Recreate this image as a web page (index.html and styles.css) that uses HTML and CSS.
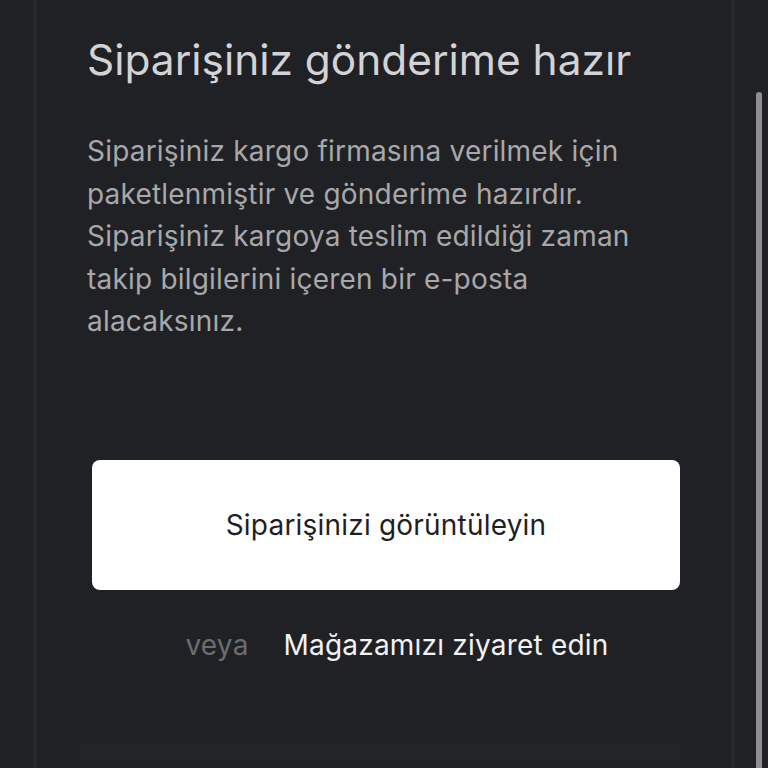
FILE: index.html
```html
<!DOCTYPE html>
<html>
<head>
    <meta charset="UTF-8">
    <title>Siparişiniz gönderime hazır</title>
    <link rel="stylesheet" href="styles.css">
</head>
<body>
    <div class="page">
        <div class="rail"></div>
        <div class="content">
            <h1 class="title">Siparişiniz gönderime hazır</h1>
            <p class="message">
                Siparişiniz kargo firmasına verilmek için paketlenmiştir ve gönderime hazırdır.
                Siparişiniz kargoya teslim edildiği zaman takip bilgilerini içeren bir e-posta
                alacaksınız.
            </p>
            <div class="actions">
                <button class="view-order">Siparişinizi görüntüleyin</button>
                <div class="alt-link">
                    <span class="or">veya</span>
                    <a href="#" class="store-link">Mağazamızı ziyaret edin</a>
                </div>
            </div>
            <div class="footer-edge"></div>
        </div>
        <div class="gutter">
            <div class="scrollbar"></div>
        </div>
    </div>
</body>
</html>
```

FILE: styles.css
```css
html, body {
    margin: 0;
    padding: 0;
    height: 100%;
    background-color: #202125;
    font-family: Inter, "Noto Sans", sans-serif;
    overflow: hidden;
}

.page {
    display: flex;
    height: 768px;
}

.rail {
    width: 33px;
    flex-shrink: 0;
    border-right: 4px solid #28292d;
}

.content {
    width: 644px;
    flex-shrink: 0;
    padding: 0 0 0 50px;
    border-right: 4px solid #28292d;
    display: flex;
    flex-direction: column;
}

.title {
    margin: 32px 0 0 0;
    font-size: 42.4px;
    font-weight: 400;
    line-height: 56px;
    color: #d3d3d5;
    white-space: nowrap;
}

.message {
    margin: 42px 0 0 0;
    width: 575px;
    font-size: 28px;
    line-height: 42.5px;
    letter-spacing: 0.2px;
    color: #a8a8aa;
}

.actions {
    margin-top: 117px;
    margin-left: 5px;
    width: 588px;
    display: flex;
    flex-direction: column;
    align-items: center;
}

.view-order {
    width: 100%;
    height: 130px;
    border: none;
    border-radius: 8px;
    background-color: #ffffff;
    color: #1f1f22;
    font-family: Inter, "Noto Sans", sans-serif;
    font-size: 28px;
    letter-spacing: 0.2px;
    cursor: pointer;
}

.alt-link {
    margin-top: 38px;
    margin-left: 22px;
    display: flex;
    align-items: baseline;
    gap: 35px;
    font-size: 28px;
    letter-spacing: 0.2px;
}

.or {
    color: #6c6c70;
}

.store-link {
    color: #f2f2f4;
    text-decoration: none;
}

.footer-edge {
    margin-top: auto;
    margin-left: -7px;
    width: 600px;
    height: 17px;
    margin-bottom: 8px;
    background-color: #232428;
}

.gutter {
    flex: 1;
    position: relative;
}

.scrollbar {
    position: absolute;
    top: 92px;
    bottom: 0;
    left: 21px;
    width: 6px;
    border-radius: 3px 3px 0 0;
    background-color: #8e8e92;
}
```
